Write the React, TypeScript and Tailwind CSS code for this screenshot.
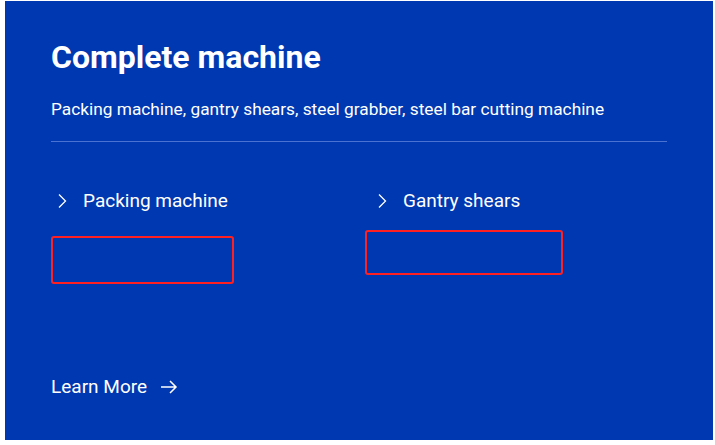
import React from 'react';

function Chevron() {
  return (
    <svg width="10" height="16" viewBox="0 0 10 16" fill="none" aria-hidden="true">
      <path d="M2 1.5 L8.5 8 L2 14.5" stroke="white" strokeWidth="1.3" />
    </svg>);

}

function Arrow() {
  return (
    <svg width="18" height="14" viewBox="0 0 18 14" fill="none" aria-hidden="true">
      <path d="M1 7 H16 M10 1 L16 7 L10 13" stroke="white" strokeWidth="1.5" />
    </svg>);

}

export default function App() {
  const font = { fontFamily: 'Roboto, "Liberation Sans", sans-serif' };
  return (
    <div className="w-[715px] h-[445px] bg-white pl-[5px] pt-px pr-[2px] pb-[5px]" style={font}>
      <div className="h-full bg-[#0038b1] pl-[46px] pr-[46px] pt-[36px] flex flex-col">
        <h1 className="text-[32px] leading-[40px] font-bold text-white">Complete machine</h1>
        <p className="mt-[21px] text-[17.3px] leading-[22px] text-white">
          Packing machine, gantry shears, steel grabber, steel bar cutting machine
        </p>
        <div className="mt-[21px] h-px bg-[#4a72d2]" />

        <div className="grid grid-cols-[320px_1fr] mt-[47px]">
          <div>
            <div className="flex items-center gap-[16px] pl-[6px] text-white text-[19px] leading-[24px]">
              <Chevron />
              <span>Packing machine</span>
            </div>
            <div className="mt-[23px] w-[183px] h-[48px] border-2 border-[#ff2121] rounded-[3px]" />
          </div>
          <div className="-ml-[6px]">
            <div className="flex items-center gap-[16px] pl-[12px] text-white text-[19px] leading-[24px]">
              <Chevron />
              <span>Gantry shears</span>
            </div>
            <div className="mt-[17px] w-[198px] h-[45px] border-2 border-[#ff2121] rounded-[3px]" />
          </div>
        </div>

        <div className="mt-auto mb-[41px] flex items-center gap-[13px] text-white text-[19px] leading-[24px]">
          <span>Learn More</span>
          <Arrow />
        </div>
      </div>
    </div>);

}
